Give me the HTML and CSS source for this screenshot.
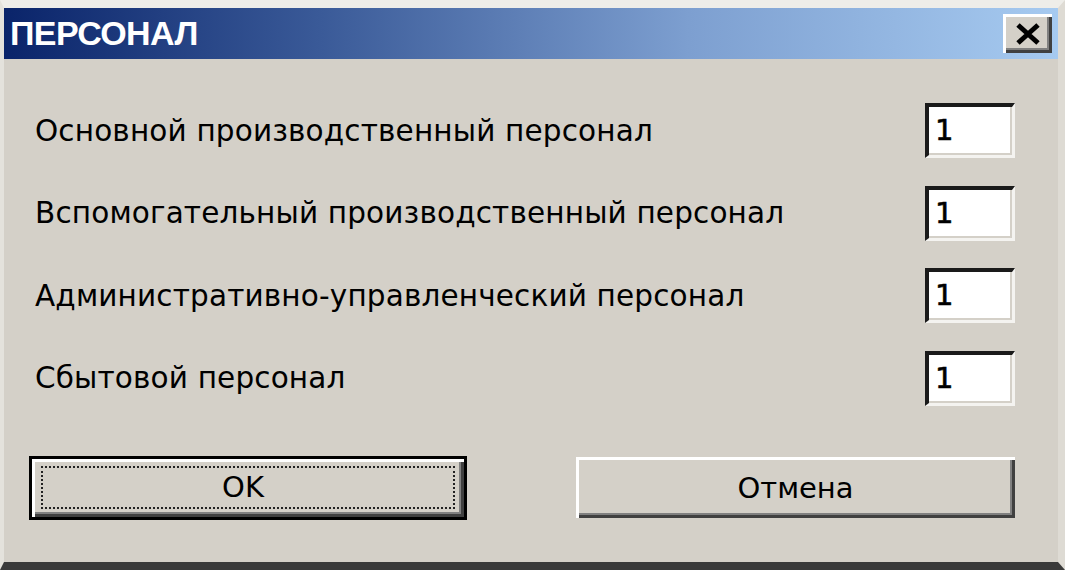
FILE: index.html
```html
<!DOCTYPE html>
<html lang="ru">
<head>
<meta charset="utf-8">
<title>ПЕРСОНАЛ</title>
<link rel="stylesheet" href="styles.css">
</head>
<body>
<div class="window">
  <div class="titlebar">
    <span class="title">ПЕРСОНАЛ</span>
    <button class="close" type="button" aria-label="Закрыть">
      <svg width="26" height="22" viewBox="0 0 26 22"><path d="M3 2 L23 20 M23 2 L3 20" stroke="#000" stroke-width="5" fill="none"/></svg>
    </button>
  </div>
  <div class="content">
    <div class="fields">
      <div class="row"><span class="label">Основной производственный персонал</span><div class="box">1</div></div>
      <div class="row"><span class="label">Вспомогательный производственный персонал</span><div class="box">1</div></div>
      <div class="row"><span class="label">Административно-управленческий персонал</span><div class="box">1</div></div>
      <div class="row"><span class="label">Сбытовой персонал</span><div class="box">1</div></div>
    </div>
    <div class="buttons">
      <button class="btn btn-default" type="button"><span class="focus">OK</span></button>
      <button class="btn btn-cancel" type="button">Отмена</button>
    </div>
  </div>
</div>
</body>
</html>
```
FILE: styles.css
```css
html, body {
  margin: 0;
  padding: 0;
  background: #d4d0c8;
}
.window {
  box-sizing: border-box;
  width: 1065px;
  height: 570px;
  background: #d4d0c8;
  border-top: 8px solid #eeede9;
  border-left: 4px solid #e4e2dc;
  border-right: 7px solid #dedbd4;
  border-bottom: 8px solid #3a3a3a;
  font-family: "DejaVu Sans", "Liberation Sans", sans-serif;
  color: #000;
  display: flex;
  flex-direction: column;
}
.titlebar {
  height: 51px;
  background: linear-gradient(to right, #0a246a 0%, #3a5a98 30%, #7d9fd0 65%, #a6caf0 100%);
  display: flex;
  align-items: center;
  justify-content: space-between;
  padding: 0 6px 0 6px;
}
.title {
  font-family: "Liberation Sans", Arial, sans-serif;
  font-weight: bold;
  font-size: 34px;
  color: #fff;
  letter-spacing: -0.6px;
}
.close {
  box-sizing: border-box;
  width: 49px;
  height: 39px;
  padding: 0;
  margin: 0;
  background: #d4d0c8;
  border: none;
  box-shadow: inset 3px 3px 0 #ffffff, inset -3px -3px 0 #404040, inset -5px -5px 0 #808080;
  display: flex;
  align-items: center;
  justify-content: center;
}
.content {
  flex: 1;
  display: flex;
  flex-direction: column;
  padding: 44px 43px 0 31px;
}
.fields {
  display: flex;
  flex-direction: column;
  gap: 27.5px;
}
.row {
  display: flex;
  align-items: center;
  justify-content: space-between;
  height: 55px;
}
.label {
  font-size: 29.5px;
  letter-spacing: 0.15px;
}
.box {
  box-sizing: border-box;
  width: 90px;
  height: 55px;
  background: #fff;
  border-top: 4px solid #1a1a1a;
  border-left: 4px solid #1a1a1a;
  border-right: 3px solid #f4f3f0;
  border-bottom: 3px solid #f4f3f0;
  box-shadow: inset -2px -2px 0 #d4d0c8;
  font-family: "DejaVu Sans", sans-serif;
  font-size: 29px;
  line-height: 46px;
  padding-left: 6px;
  -webkit-text-stroke: 0.6px #000;
}
.buttons {
  display: flex;
  align-items: center;
  justify-content: space-between;
  margin-top: 50px;
  margin-left: -6px;
}
.btn {
  box-sizing: border-box;
  margin: 0;
  padding: 0;
  background: #d4d0c8;
  font-family: "DejaVu Sans", "Liberation Sans", sans-serif;
  font-size: 29px;
  color: #000;
  border: none;
}
.btn-default {
  width: 438px;
  height: 64px;
  border: 3px solid #000;
  box-shadow: inset 3px 3px 0 #ffffff, inset -3px -3px 0 #404040, inset -5px -5px 0 #808080;
  padding: 7px 9px 8px 9px;
  display: flex;
}
.focus {
  flex: 1;
  display: flex;
  align-items: center;
  justify-content: center;
  border: 2px dotted #222;
  padding-right: 10px;
}
.btn-cancel {
  width: 439px;
  height: 61px;
  box-shadow: inset 3px 3px 0 #ffffff, inset -3px -3px 0 #404040, inset -5px -5px 0 #808080;
  margin-right: 0;
}
```
